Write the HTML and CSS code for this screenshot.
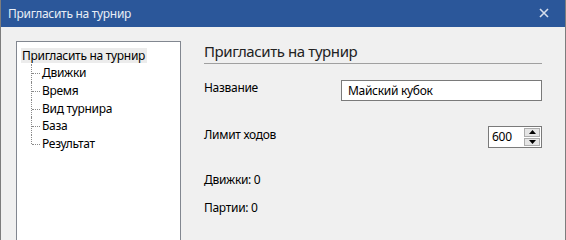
FILE: index.html
```html
<!DOCTYPE html>
<html lang="ru">
<head>
<meta charset="utf-8">
<title>Пригласить на турнир</title>
<link rel="stylesheet" href="styles.css">
</head>
<body>
<div class="window">
  <div class="titlebar">
    <span class="title">Пригласить на турнир</span>
    <svg class="close" width="10" height="10" viewBox="0 0 10 10"><path d="M1 1L9 9M9 1L1 9" stroke="#d6deec" stroke-width="1.6"/></svg>
  </div>
  <div class="content">
    <div class="tree">
      <div class="root">Пригласить на турнир</div>
      <ul class="children">
        <li>Движки</li>
        <li>Время</li>
        <li>Вид турнира</li>
        <li>База</li>
        <li class="last">Результат</li>
      </ul>
    </div>
    <div class="panel">
      <div class="heading">Пригласить на турнир</div>
      <div class="row row-name">
        <span class="label">Название</span>
        <div class="textbox">Майский кубок</div>
      </div>
      <div class="row row-limit">
        <span class="label">Лимит ходов</span>
        <div class="spinner">
          <span class="spin-value">600</span>
          <div class="spin-buttons">
            <div class="spin-btn"><svg width="7" height="4" viewBox="0 0 7 4"><path d="M0 4L3.5 0L7 4Z" fill="#000"/></svg></div>
            <div class="spin-btn"><svg width="7" height="4" viewBox="0 0 7 4"><path d="M0 0L3.5 4L7 0Z" fill="#000"/></svg></div>
          </div>
        </div>
      </div>
      <div class="stat stat-engines">Движки: 0</div>
      <div class="stat stat-games">Партии: 0</div>
    </div>
  </div>
</div>
</body>
</html>
```

FILE: styles.css
```css
* { box-sizing: border-box; }
html, body { margin: 0; padding: 0; }
body {
  width: 566px;
  height: 240px;
  overflow: hidden;
  font-family: "Noto Sans", "Open Sans", sans-serif;
  font-size: 12px;
  letter-spacing: -0.3px;
  color: #000;
  background: #f0f0f0;
}
.window {
  width: 566px;
  height: 240px;
  overflow: hidden;
  border-left: 1px solid #7d7d7d;
  border-right: 1px solid #7d7d7d;
  background: #f0f0f0;
  display: flex;
  flex-direction: column;
}
.titlebar {
  height: 27px;
  flex: none;
  background: #2b579a;
  display: flex;
  align-items: center;
  justify-content: space-between;
  padding: 0 16px 1px 7px;
}
.title {
  color: #e9eef6;
  font-size: 12px;
}
.close { display: block; }
.content {
  flex: 1;
  display: flex;
  padding: 14px 0 0 15px;
  min-height: 0;
  overflow: hidden;
}
.tree {
  width: 165px;
  height: 199px;
  flex: none;
  background: #fff;
  border: 1px solid #828790;
  border-bottom: none;
  padding: 5px 0 0 4px;
}
.root {
  display: inline-block;
  height: 15px;
  line-height: 15px;
  padding: 0 2px 0 1px;
  background: #ececec;
  white-space: nowrap;
}
.children {
  list-style: none;
  margin: 0 0 0 10px;
  padding: 0;
  position: relative;
}
.children li {
  height: 17.75px;
  line-height: 17.75px;
  padding-left: 11px;
  position: relative;
  white-space: nowrap;
}
.children li::before {
  content: "";
  position: absolute;
  left: 0;
  top: 0;
  height: 100%;
  border-left: 1px dotted #8a8a8a;
}
.children li.last::before { height: 9px; }
.children li::after {
  content: "";
  position: absolute;
  left: 1px;
  top: 9px;
  width: 8px;
  border-top: 1px dotted #8a8a8a;
}
.panel {
  width: 338px;
  margin-left: 23px;
  display: flex;
  flex-direction: column;
}
.heading {
  font-size: 15px;
  letter-spacing: -0.4px;
  line-height: 20px;
  height: 23px;
  color: #222;
  border-bottom: 1px solid #a0a0a0;
}
.row {
  display: flex;
  justify-content: space-between;
  align-items: flex-start;
}
.row-name { margin-top: 16px; }
.row-name .label { line-height: 16px; }
.textbox {
  width: 201px;
  height: 21px;
  background: #fff;
  border: 1px solid #7a7a7a;
  padding-left: 6px;
  line-height: 19px;
}
.row-limit { margin-top: 25px; }
.row-limit .label { line-height: 16px; padding-top: 1px; }
.spinner {
  width: 54px;
  height: 22px;
  background: #fff;
  border: 1px solid #7a7a7a;
  display: flex;
  justify-content: space-between;
  padding: 1px 1px 1px 3px;
}
.spin-value { line-height: 18px; }
.spin-buttons {
  width: 16px;
  display: flex;
  flex-direction: column;
  gap: 1px;
}
.spin-btn {
  flex: 1;
  background: #e5e5e5;
  border: 1px solid #adadad;
  display: flex;
  align-items: center;
  justify-content: center;
}
.spin-btn svg { display: block; }
.stat { line-height: 16px; }
.stat-engines { margin-top: 24px; }
.stat-games { margin-top: 12px; }
```
